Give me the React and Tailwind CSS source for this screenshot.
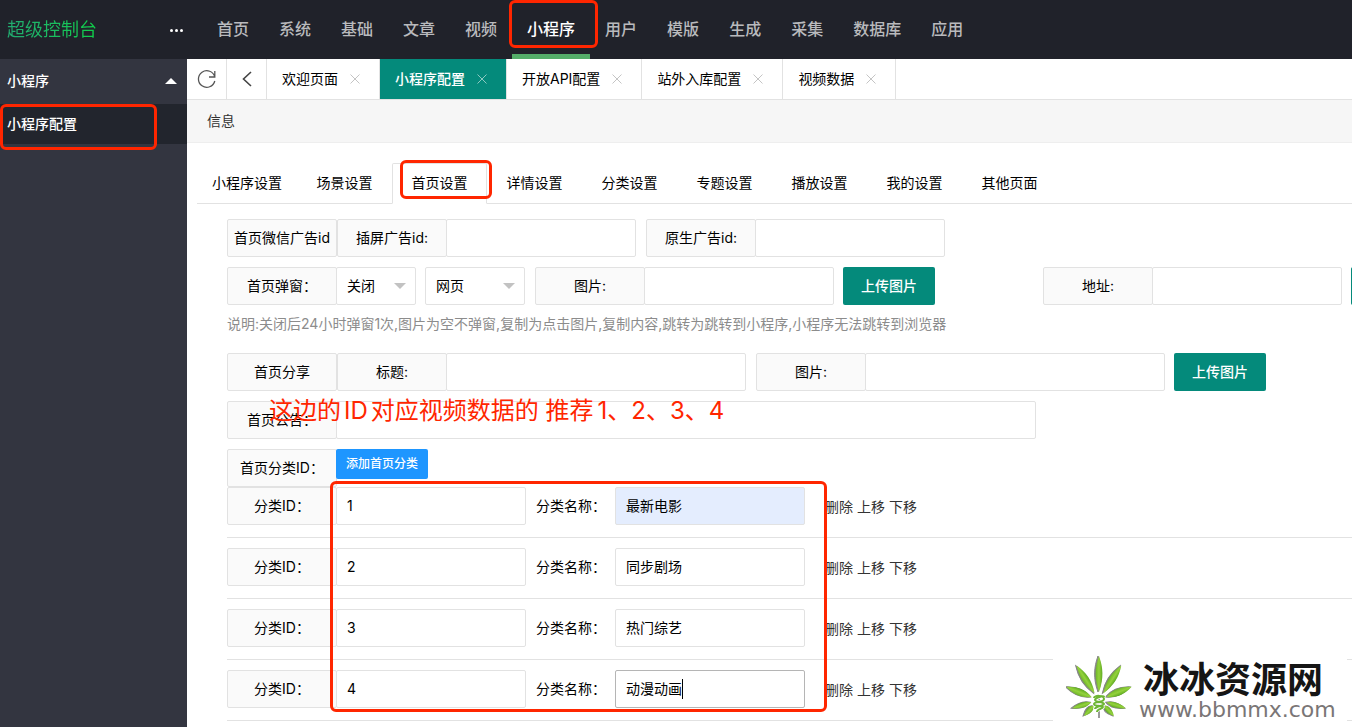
import { useState } from "react";
import clsx from "clsx";

const NAV = ["首页", "系统", "基础", "文章", "视频", "小程序", "用户", "模版", "生成", "采集", "数据库", "应用"];

const PAGE_TABS = ["欢迎页面", "小程序配置", "开放API配置", "站外入库配置", "视频数据"];

const SETTING_TABS = [
  "小程序设置",
  "场景设置",
  "首页设置",
  "详情设置",
  "分类设置",
  "专题设置",
  "播放设置",
  "我的设置",
  "其他页面",
];

const CATEGORIES = [
  { id: "1", name: "最新电影" },
  { id: "2", name: "同步剧场" },
  { id: "3", name: "热门综艺" },
  { id: "4", name: "动漫动画" },
];

function Mark({ className }) {
  return (
    <div
      aria-hidden="true"
      className={clsx("pointer-events-none absolute z-10 rounded-md border-3 border-[#ff2600]", className)}
    />
  );
}

function Caption({ htmlFor, children }) {
  const Tag = htmlFor ? "label" : "div";
  return (
    <Tag
      htmlFor={htmlFor}
      className="h-[38px] w-[110px] shrink-0 whitespace-nowrap rounded-xs border border-[#e2e2e2] bg-[#fafafa] text-center leading-9"
    >
      {children}
    </Tag>
  );
}

function Field({ id, label, className = "w-[190px]", ...props }) {
  return (
    <div className="flex shrink-0">
      <Caption htmlFor={id}>{label}</Caption>
      <input
        id={id}
        type="text"
        className={clsx("-ml-px h-[38px] rounded-xs border border-[#e2e2e2] bg-white px-2.5 pb-0.5 outline-none", className)}
        {...props}
      />
    </div>
  );
}

function Select({ className, options, ...props }) {
  return (
    <div className={clsx("relative shrink-0", className)}>
      <select
        className="h-[38px] w-full appearance-none rounded-xs border border-[#e2e2e2] bg-white px-2.5 outline-none"
        {...props}
      >
        {options.map((option) => (
          <option key={option}>{option}</option>
        ))}
      </select>
      <span className="pointer-events-none absolute right-2.5 top-4 border-x-6 border-t-6 border-x-transparent border-t-[#c2c2c2]" />
    </div>
  );
}

function UploadButton({ className }) {
  return (
    <button
      type="button"
      className={clsx("h-[38px] w-[92px] shrink-0 rounded-xs bg-[#048a7b] font-medium text-white", className)}
    >
      上传图片
    </button>
  );
}

function CategoryRow({ category, active, filled }) {
  const nameId = `name-${category.id}`;
  return (
    <div className="mb-2.5 flex items-center border-b border-[#e2e2e2] pb-3">
      <Field id={`cat-${category.id}`} label="分类ID：" defaultValue={category.id} />
      <label htmlFor={nameId} className="w-[89px] shrink-0 whitespace-nowrap pl-2.5">
        分类名称：
      </label>
      <div className="relative shrink-0">
        <input
          id={nameId}
          type="text"
          defaultValue={category.name}
          className={clsx(
            "block h-[38px] w-[190px] rounded-xs border px-2.5 pb-0.5 outline-none",
            active ? "border-[#b5b5b5]" : "border-[#e2e2e2]",
            filled ? "bg-[#e4edfe]" : "bg-white"
          )}
        />
        {active && <span className="absolute left-[67px] top-[9px] h-5 w-px bg-black" />}
      </div>
      <div className="ml-5 flex shrink-0 gap-1 pt-0.5 text-[#333]">
        <a href="#">删除</a>
        <a href="#">上移</a>
        <a href="#">下移</a>
      </div>
    </div>
  );
}

function Leaf() {
  // blades as [angle, length, half width]
  const blades = [
    [-137, 22, 3],
    [137, 22, 3],
    [-107, 28, 3],
    [107, 28, 3],
    [-68, 35, 4],
    [68, 35, 4],
    [-33, 41, 4],
    [33, 41, 4],
    [0, 44, 4],
  ];
  const knot = "M28 45C28 42 38 42 38 46S28 48 28 51S37 52 37 54S31 56 31 59M38 44C38 42 29 45 29 47S38 49 38 51S29 53 29 56";
  return (
    <svg width="66" height="72" viewBox="0 0 66 72" aria-hidden="true">
      <defs>
        <linearGradient id="blade" x1="0" x2="1" y1="0" y2="0">
          <stop offset="0" stopColor="#6fb52a" />
          <stop offset="0.5" stopColor="#94d23c" />
          <stop offset="1" stopColor="#5fab22" />
        </linearGradient>
      </defs>
      {blades.map(([angle, length, half]) => {
        const d = `M0 -8 C${-half - 1} ${-length * 0.5} ${-half} ${-length * 0.75} 0 ${-length} C${half} ${-length * 0.75} ${half + 1} ${-length * 0.5} 0 -8Z`;
        return (
          <g key={angle}>
            <path d={d} transform={`translate(32 47) rotate(${angle})`} fill="#858585" stroke="#858585" />
            <path d={d} transform={`translate(33 47) rotate(${angle})`} fill="url(#blade)" />
          </g>
        );
      })}
      <path d="M33 42V65" stroke="#9a9a9a" strokeWidth="2" />
      <path d={knot} fill="none" stroke="#fff" strokeWidth="3.5" />
      <path d={knot} fill="none" stroke="#6db534" strokeWidth="2" />
    </svg>
  );
}

function Watermark() {
  return (
    <div className="absolute bottom-0 right-[5px] z-10 flex h-[74px] w-[294px] bg-white pl-[13px]">
      <Leaf />
      <div className="ml-[7px] whitespace-nowrap">
        <div className="pl-1 pt-1 font-['Noto_Sans_CJK_SC',sans-serif] text-[36px] font-bold leading-10 text-[#151515]">
          冰冰资源网
        </div>
        <div className="pt-px font-['DejaVu_Sans',sans-serif] text-[22px] leading-6 text-[#7a7676]">www.bbmmx.com</div>
      </div>
    </div>
  );
}

export default function App() {
  const [pageTab, setPageTab] = useState("小程序配置");
  const [settingTab, setSettingTab] = useState("首页设置");

  return (
    <div className="relative flex h-screen flex-col overflow-hidden bg-white font-[Inter,'Noto_Sans_CJK_SC',sans-serif] text-sm text-black">
      <header className="flex h-[59px] shrink-0 bg-[#20222a]">
        <div className="flex w-[187px] shrink-0 items-center justify-between pl-[7px] pr-1">
          <h1 className="bg-linear-to-r from-[#22aa70] to-[#0fd048] bg-clip-text text-lg text-transparent">超级控制台</h1>
          <button type="button" aria-label="更多" className="flex gap-0.5 pt-0.5">
            <span className="size-[3px] rounded-full bg-white" />
            <span className="size-[3px] rounded-full bg-white" />
            <span className="size-[3px] rounded-full bg-white" />
          </button>
        </div>
        <nav className="ml-[15px] flex text-base text-[#b9babd]">
          {NAV.map((item) => {
            const active = item === "小程序";
            return (
              <a
                key={item}
                href="#"
                className={clsx(
                  "relative whitespace-nowrap px-[15px] font-medium leading-[59px]",
                  active && "text-white"
                )}
              >
                {item}
                {active && (
                  <>
                    <span className="absolute inset-x-0 bottom-0 h-[5px] bg-[#54ad69]" />
                    <Mark className="-left-[3px] -right-2 bottom-[11px] top-0" />
                  </>
                )}
              </a>
            );
          })}
        </nav>
      </header>

      <div className="flex min-h-0 flex-1">
        <aside className="w-[187px] shrink-0 bg-[#333540] text-white">
          <button type="button" className="flex h-[45px] w-full items-center justify-between pb-0.5 pl-[7px] pr-2.5 font-medium">
            小程序
            <span className="border-x-6 border-b-6 border-x-transparent border-b-white" />
          </button>
          <div className="relative bg-[#22252d]">
            <a href="#" className="block pl-[7px] font-medium leading-10">
              小程序配置
            </a>
            <Mark className="-bottom-1.5 top-0 left-0 right-[30px]" />
          </div>
        </aside>

        <main className="min-w-0 flex-1 overflow-hidden">
          <div className="flex h-[41px] border-b border-[#e2e2e2]">
            <button
              type="button"
              aria-label="刷新"
              className="flex w-10 shrink-0 items-center justify-center border-r border-[#e2e2e2]"
            >
              <svg width="20" height="20" viewBox="0 0 20 20" fill="none" stroke="#555" strokeWidth="1.3">
                <path d="M17.8 8A8.3 8.3 0 1 0 17.8 12M17.8 2V8H12" />
              </svg>
            </button>
            <button
              type="button"
              aria-label="后退"
              className="flex w-10 shrink-0 items-center justify-center border-r border-[#e2e2e2]"
            >
              <svg width="10" height="16" viewBox="0 0 10 16" fill="none" stroke="#444" strokeWidth="1.6">
                <path d="M9 1L1.5 8L9 15" />
              </svg>
            </button>
            {PAGE_TABS.map((tab) => {
              const active = tab === pageTab;
              return (
                <button
                  key={tab}
                  type="button"
                  onClick={() => setPageTab(tab)}
                  className={clsx(
                    "flex shrink-0 items-center gap-3 border-r border-[#e2e2e2] pl-[15px] pr-[19px]",
                    active && "bg-[#048a7b] font-medium text-white"
                  )}
                >
                  {tab}
                  <svg width="10" height="10" viewBox="0 0 10 10" stroke={active ? "#8cc9c1" : "#c4c4c4"}>
                    <path d="M0.5 0.5L9.5 9.5M9.5 0.5L0.5 9.5" />
                  </svg>
                </button>
              );
            })}
          </div>

          <div className="border-b border-[#eee] bg-[#f6f6f6] px-5 leading-[42px] text-[#333]">信息</div>

          <div className="pl-2.5 pt-5">
            <div className="flex">
              {SETTING_TABS.map((tab) => {
                const active = tab === settingTab;
                return (
                  <button
                    key={tab}
                    type="button"
                    onClick={() => setSettingTab(tab)}
                    className={clsx(
                      "relative h-[41px] min-w-[95px] shrink-0 whitespace-nowrap border-b border-[#e2e2e2] pb-0.5",
                      active ? "rounded-t-xs border-x border-t border-b-white px-3.5" : "px-[15px] pt-px"
                    )}
                  >
                    {tab}
                    {tab === "首页设置" && <Mark className="-right-1.5 -top-1 bottom-1 left-[7px]" />}
                  </button>
                );
              })}
              <div className="flex-1 border-b border-[#e2e2e2]" />
            </div>

            <form className="pl-[30px] pt-[15px]">
              <div className="mb-2.5 flex">
                <Caption>首页微信广告id</Caption>
                <Field id="ad-insert" label="插屏广告id:" />
                <div className="ml-2.5">
                  <Field id="ad-native" label="原生广告id:" />
                </div>
              </div>

              <div className="flex">
                <Caption htmlFor="popup">首页弹窗：</Caption>
                <Select id="popup" className="-ml-px w-20" options={["关闭", "开启"]} />
                <Select aria-label="弹窗类型" className="ml-[9px] mr-2.5 w-[100px]" options={["网页", "复制", "跳转"]} />
                <Field id="popup-image" label="图片:" />
                <UploadButton className="ml-[9px] mr-27" />
                <Field id="popup-url" label="地址:" />
                <UploadButton className="ml-[9px]" />
              </div>
              <p className="mb-[19px] whitespace-nowrap pt-[9px] leading-5 text-[#8c8c8c]">
                说明:关闭后24小时弹窗1次,图片为空不弹窗,复制为点击图片,复制内容,跳转为跳转到小程序,小程序无法跳转到浏览器
              </p>

              <div className="mb-2.5 flex">
                <Caption>首页分享</Caption>
                <Field id="share-title" label="标题:" className="w-[300px]" />
                <div className="ml-2.5">
                  <Field id="share-image" label="图片:" className="w-[300px]" />
                </div>
                <UploadButton className="ml-[9px]" />
              </div>

              <div className="relative mb-2.5">
                <Field id="notice" label="首页公告：" className="w-[700px]" />
                <div className="pointer-events-none absolute -top-1.5 left-[42px] z-10 whitespace-nowrap text-2xl text-[#ff2600]">
                  这边的<span className="px-[3px]">ID</span>对应视频数据的 推荐<span className="pl-1">1、2、3、4</span>
                </div>
              </div>

              <div className="flex">
                <Caption>首页分类ID：</Caption>
                <button
                  type="button"
                  className="-ml-px h-[30px] w-[92px] rounded-xs bg-[#1e96ff] text-xs font-medium text-white"
                >
                  添加首页分类
                </button>
              </div>

              <div className="relative">
                {CATEGORIES.map((category, i) => (
                  <CategoryRow
                    key={category.id}
                    category={category}
                    filled={i === 0}
                    active={i === CATEGORIES.length - 1}
                  />
                ))}
                <Mark className="-top-1.5 bottom-[9px] left-[103px] w-[497px]" />
              </div>
            </form>
          </div>
        </main>
      </div>

      <Watermark />
    </div>
  );
}
